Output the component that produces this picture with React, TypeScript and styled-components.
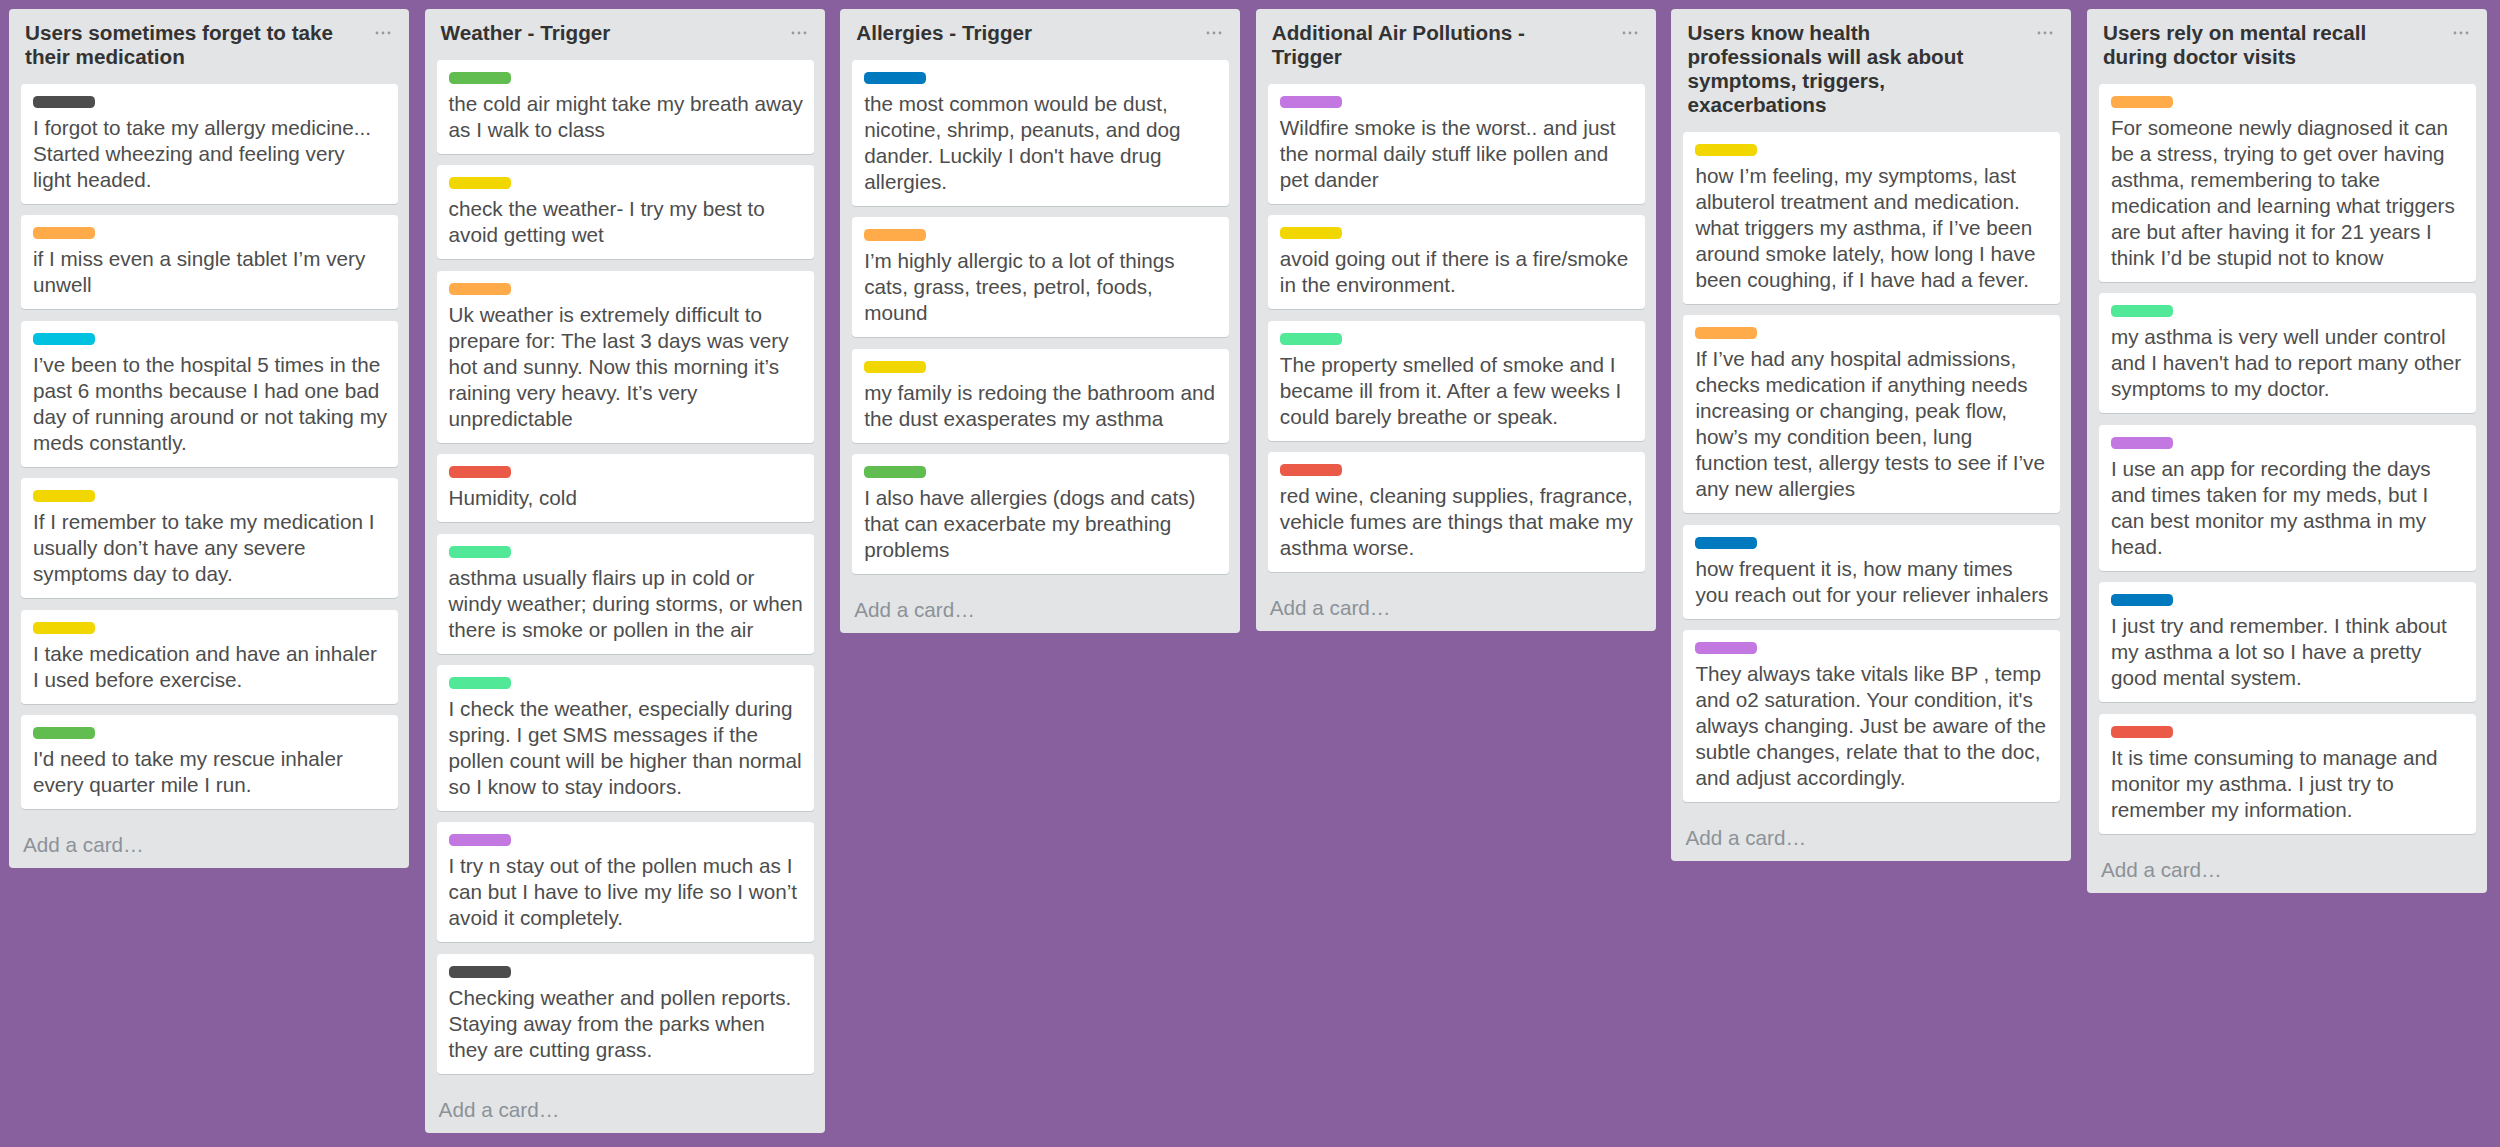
import React from "react";
import styled, { createGlobalStyle } from "styled-components";

const GlobalStyle = createGlobalStyle`
  html, body {
    margin: 0;
    padding: 0;
    background: #89609e;
  }
  body {
    font-family: "Liberation Sans", Arial, Helvetica, sans-serif;
    min-height: 100vh;
    overflow: hidden;
  }
`;

type LabelColor =
  | "black"
  | "orange"
  | "sky"
  | "yellow"
  | "green"
  | "red"
  | "lime"
  | "purple"
  | "blue";

const labelColors: Record<LabelColor, string> = {
  black: "#4d4d4d",
  orange: "#ffab4a",
  sky: "#00c2e0",
  yellow: "#f2d600",
  green: "#61bd4f",
  red: "#eb5a46",
  lime: "#51e898",
  purple: "#c377e0",
  blue: "#0079bf",
};

interface CardData {
  label: LabelColor;
  text: string;
}

interface ListData {
  title: string;
  cards: CardData[];
}

const lists: ListData[] = [
  {
    title: "Users sometimes forget to take their medication",
    cards: [
      {
        label: "black",
        text: "I forgot to take my allergy medicine...\nStarted wheezing and feeling very\nlight headed.",
      },
      { label: "orange", text: "if I miss even a single tablet I’m very\nunwell" },
      {
        label: "sky",
        text: "I’ve been to the hospital 5 times in the\npast 6 months because I had one bad\nday of running around or not taking my\nmeds constantly.",
      },
      {
        label: "yellow",
        text: "If I remember to take my medication I\nusually don’t have any severe\nsymptoms day to day.",
      },
      {
        label: "yellow",
        text: "I take medication and have an inhaler\nI used before exercise.",
      },
      {
        label: "green",
        text: "I'd need to take my rescue inhaler\nevery quarter mile I run.",
      },
    ],
  },
  {
    title: "Weather - Trigger",
    cards: [
      { label: "green", text: "the cold air might take my breath away\nas I walk to class" },
      { label: "yellow", text: "check the weather- I try my best to\navoid getting wet" },
      {
        label: "orange",
        text: "Uk weather is extremely difficult to\nprepare for: The last 3 days was very\nhot and sunny. Now this morning it’s\nraining very heavy. It’s very\nunpredictable",
      },
      { label: "red", text: "Humidity, cold" },
      {
        label: "lime",
        text: "asthma usually flairs up in cold or\nwindy weather; during storms, or when\nthere is smoke or pollen in the air",
      },
      {
        label: "lime",
        text: "I check the weather, especially during\nspring. I get SMS messages if the\npollen count will be higher than normal\nso I know to stay indoors.",
      },
      {
        label: "purple",
        text: "I try n stay out of the pollen much as I\ncan but I have to live my life so I won’t\navoid it completely.",
      },
      {
        label: "black",
        text: "Checking weather and pollen reports.\nStaying away from the parks when\nthey are cutting grass.",
      },
    ],
  },
  {
    title: "Allergies - Trigger",
    cards: [
      {
        label: "blue",
        text: "the most common would be dust,\nnicotine, shrimp, peanuts, and dog\ndander. Luckily I don't have drug\nallergies.",
      },
      {
        label: "orange",
        text: "I’m highly allergic to a lot of things\ncats, grass, trees, petrol, foods,\nmound",
      },
      {
        label: "yellow",
        text: "my family is redoing the bathroom and\nthe dust exasperates my asthma",
      },
      {
        label: "green",
        text: "I also have allergies (dogs and cats)\nthat can exacerbate my breathing\nproblems",
      },
    ],
  },
  {
    title: "Additional Air Pollutions - Trigger",
    cards: [
      {
        label: "purple",
        text: "Wildfire smoke is the worst.. and just\nthe normal daily stuff like pollen and\npet dander",
      },
      {
        label: "yellow",
        text: "avoid going out if there is a fire/smoke\nin the environment.",
      },
      {
        label: "lime",
        text: "The property smelled of smoke and I\nbecame ill from it. After a few weeks I\ncould barely breathe or speak.",
      },
      {
        label: "red",
        text: "red wine, cleaning supplies, fragrance,\nvehicle fumes are things that make my\nasthma worse.",
      },
    ],
  },
  {
    title: "Users know health professionals will ask about symptoms, triggers, exacerbations",
    cards: [
      {
        label: "yellow",
        text: "how I’m feeling, my symptoms, last\nalbuterol treatment and medication.\nwhat triggers my asthma, if I’ve been\naround smoke lately, how long I have\nbeen coughing, if I have had a fever.",
      },
      {
        label: "orange",
        text: "If I’ve had any hospital admissions,\nchecks medication if anything needs\nincreasing or changing, peak flow,\nhow’s my condition been, lung\nfunction test, allergy tests to see if I’ve\nany new allergies",
      },
      {
        label: "blue",
        text: "how frequent it is, how many times\nyou reach out for your reliever inhalers",
      },
      {
        label: "purple",
        text: "They always take vitals like BP , temp\nand o2 saturation. Your condition, it's\nalways changing. Just be aware of the\nsubtle changes, relate that to the doc,\nand adjust accordingly.",
      },
    ],
  },
  {
    title: "Users rely on mental recall during doctor visits",
    cards: [
      {
        label: "orange",
        text: "For someone newly diagnosed it can\nbe a stress, trying to get over having\nasthma, remembering to take\nmedication and learning what triggers\nare but after having it for 21 years I\nthink I’d be stupid not to know",
      },
      {
        label: "lime",
        text: "my asthma is very well under control\nand I haven't had to report many other\nsymptoms to my doctor.",
      },
      {
        label: "purple",
        text: "I use an app for recording the days\nand times taken for my meds, but I\ncan best monitor my asthma in my\nhead.",
      },
      {
        label: "blue",
        text: "I just try and remember. I think about\nmy asthma a lot so I have a pretty\ngood mental system.",
      },
      {
        label: "red",
        text: "It is time consuming to manage and\nmonitor my asthma. I just try to\nremember my information.",
      },
    ],
  },
];

const Board = styled.div`
  display: flex;
  flex-direction: row;
  align-items: flex-start;
  gap: 15.6px;
  padding: 9px;
`;

const List = styled.section`
  width: 400px;
  flex: 0 0 400px;
  background: #e2e4e6;
  border-radius: 4px;
  display: flex;
  flex-direction: column;
`;

const ListHeader = styled.header`
  display: flex;
  align-items: flex-start;
  justify-content: space-between;
  padding: 12px 18px 15px 16px;
`;

const ListTitle = styled.h2`
  margin: 0;
  width: 320px;
  font-size: 20.7px;
  line-height: 24px;
  font-weight: 700;
  color: #333333;
`;

const MenuButton = styled.span`
  display: flex;
  align-items: center;
  height: 24px;
  color: #999999;
`;

const Cards = styled.div`
  display: flex;
  flex-direction: column;
  gap: 11.4px;
  padding: 0 11px 0 12px;
`;

const Card = styled.article`
  background: #ffffff;
  border-radius: 4px;
  box-shadow: 0 1px 0 #c4c9cc;
  padding: 12px 6px 11px 12px;
`;

const Label = styled.span<{ $color: string }>`
  display: block;
  width: 62px;
  height: 12px;
  border-radius: 4.5px;
  background: ${(p) => p.$color};
  margin-bottom: 7px;
`;

const CardText = styled.p`
  margin: 0;
  font-size: 20.7px;
  line-height: 26px;
  color: #4d4d4d;
  white-space: pre-line;
`;

const AddCard = styled.div`
  padding: 24px 14px 11px 14px;
  font-size: 20.7px;
  line-height: 24px;
  color: #8c9297;
`;

const Dots = () => (
  <svg width="16" height="4" viewBox="0 0 16 4" aria-hidden="true">
    <circle cx="2" cy="2" r="1.4" fill="currentColor" />
    <circle cx="8" cy="2" r="1.4" fill="currentColor" />
    <circle cx="14" cy="2" r="1.4" fill="currentColor" />
  </svg>
);

export default function App() {
  return (
    <>
      <GlobalStyle />
      <Board>
        {lists.map((list) => (
          <List key={list.title}>
            <ListHeader>
              <ListTitle>{list.title}</ListTitle>
              <MenuButton>
                <Dots />
              </MenuButton>
            </ListHeader>
            <Cards>
              {list.cards.map((card, i) => (
                <Card key={i}>
                  <Label $color={labelColors[card.label]} />
                  <CardText>{card.text}</CardText>
                </Card>
              ))}
            </Cards>
            <AddCard>Add a card…</AddCard>
          </List>
        ))}
      </Board>
    </>
  );
}
